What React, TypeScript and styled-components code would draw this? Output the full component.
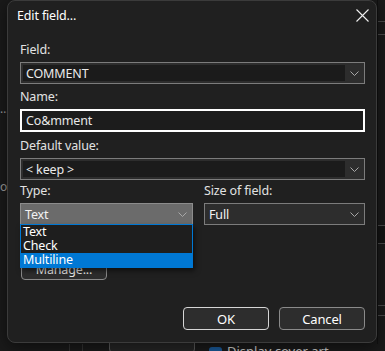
import React from "react";
import styled, { createGlobalStyle } from "styled-components";

const Global = createGlobalStyle`
  html, body { margin: 0; padding: 0; background: #1a1a1a; }
  body { font-family: "Noto Sans", "Open Sans", sans-serif; }
  * { box-sizing: border-box; }
`;

const Page = styled.div`
  position: relative;
  width: 385px;
  height: 351px;
  overflow: hidden;
  background: #1a1a1a;
  display: flex;
  flex-direction: column;
`;

/* ---------- background app (mostly hidden behind the dialog) ---------- */
const BackMain = styled.div`
  flex: 1;
  display: flex;
`;

const BackLeft = styled.div`
  width: 8px;
  display: flex;
  flex-direction: column;
  padding-top: 101px;
  gap: 62px;
  font-size: 12px;
  color: #9a9a9a;
  line-height: 16px;
`;

const BackCenter = styled.div`
  flex: 1;
`;

const BackRight = styled.div`
  width: 8px;
  display: flex;
  flex-direction: column;
  border-left: 1px solid #111;
`;

const RightSeg = styled.div<{ $h: number; $line?: boolean; $bg?: string }>`
  height: ${(p) => p.$h}px;
  flex: none;
  border-bottom: ${(p) => (p.$line ? "1px solid #4a4a4a" : "none")};
  background: ${(p) => p.$bg || "transparent"};
`;

const BackBottom = styled.div`
  height: 10px;
  margin-bottom: -3px;
  display: flex;
  align-items: flex-start;
  flex: none;
`;

const VLine = styled.div<{ $ml: number }>`
  width: 1px;
  height: 100%;
  margin-left: ${(p) => p.$ml}px;
  background: #333;
`;

const BackButton = styled.div`
  margin-left: 26px;
  margin-top: -8px;
  width: 86px;
  height: 17px;
  border: 1px solid #5c5c5c;
  border-radius: 4px;
  background: #262626;
`;

const BackCheck = styled.div`
  margin-left: 14px;
  margin-top: 3px;
  width: 13px;
  height: 13px;
  border-radius: 3px;
  background: #1a5a9a;
`;

const BackText = styled.div`
  margin-left: 5px;
  margin-top: -1px;
  font-size: 13px;
  line-height: 16px;
  color: #cfcfcf;
  white-space: nowrap;
`;

/* ---------------- dialog ---------------- */
const Dialog = styled.div`
  position: absolute;
  left: 7px;
  top: 0;
  width: 370px;
  height: 343px;
  border: 1px solid #3b3b3b;
  border-radius: 8px;
  background: #202020;
  box-shadow: 0 4px 16px rgba(0, 0, 0, 0.5);
  display: flex;
  flex-direction: column;
  color: #e4e4e4;
  font-size: 12px;
  letter-spacing: -0.15px;
`;

const TitleBar = styled.div`
  height: 31px;
  flex: none;
  display: flex;
  align-items: center;
  justify-content: space-between;
  padding: 0 7px 0 9px;
`;

const Title = styled.div`
  font-size: 12.5px;
  color: #ffffff;
  padding-bottom: 2px;
`;

const CloseBtn = styled.div`
  width: 14px;
  height: 14px;
  display: flex;
  align-items: center;
  justify-content: center;
  margin-bottom: 2px;
`;

const Body = styled.div`
  flex: 1;
  display: flex;
  flex-direction: column;
  padding: 0 11px 12px 12px;
`;

const Label = styled.div<{ $mt: number }>`
  margin-top: ${(p) => p.$mt}px;
  margin-bottom: 4px;
  height: 16px;
  line-height: 16px;
  font-size: 12.5px;
  color: #e2e2e2;
  white-space: nowrap;
`;

const Combo = styled.div<{ $open?: boolean }>`
  position: relative;
  height: 22px;
  border: 1px solid ${(p) => (p.$open ? "#8c8c8c" : "#7c7c7c")};
  background: ${(p) => (p.$open ? "#6b6b6b" : "#2d2d2d")};
  display: flex;
  align-items: stretch;
`;

const EditArea = styled.div`
  flex: 1;
  margin: 2px 0 2px 2px;
  background: #1b1b1b;
  padding-left: 3px;
  display: flex;
  align-items: center;
  font-size: 12.5px;
  color: #eaeaea;
`;

const ComboText = styled.div`
  flex: 1;
  padding-left: 4px;
  display: flex;
  align-items: center;
  font-size: 12.5px;
  color: #f2f2f2;
`;

const Arrow = styled.div`
  width: 19px;
  flex: none;
  display: flex;
  align-items: center;
  justify-content: center;
`;

const TextInput = styled.div`
  height: 23px;
  border: 2px solid #ffffff;
  background: #1c1c1c;
  padding-left: 4px;
  display: flex;
  align-items: center;
  font-size: 12.5px;
  color: #e8e8e8;
`;

const TwoCols = styled.div`
  display: grid;
  grid-template-columns: 173px 161px;
  column-gap: 11px;
`;

const Col = styled.div`
  display: flex;
  flex-direction: column;
`;

const DropList = styled.div`
  position: absolute;
  left: -1px;
  right: -1px;
  top: 100%;
  z-index: 2;
  border: 1px solid #0078d4;
  border-bottom: none;
  background: #1e1e1e;
  display: flex;
  flex-direction: column;
  box-shadow: 2px 3px 5px rgba(0, 0, 0, 0.5);
`;

const DropItem = styled.div<{ $sel?: boolean }>`
  height: 14px;
  line-height: 14px;
  margin: ${(p) => (p.$sel ? "0 -1px" : "0")};
  padding-left: ${(p) => (p.$sel ? "3px" : "2px")};
  background: ${(p) => (p.$sel ? "#0078d4" : "transparent")};
  color: #ffffff;
  font-size: 12.5px;
  &:last-child {
    height: 15px;
  }
`;

const ManageButton = styled.div`
  margin-top: 33px;
  margin-left: 1px;
  width: 86px;
  height: 22px;
  border: 1px solid #8a8a8a;
  border-radius: 4px;
  background: #2d2d2d;
  display: flex;
  align-items: center;
  justify-content: center;
  font-size: 12.5px;
  color: #eaeaea;
`;

const Spacer = styled.div`
  flex: 1;
`;

const ButtonRow = styled.div`
  display: flex;
  justify-content: flex-end;
  gap: 10px;
`;

const Button = styled.div<{ $primary?: boolean; $w: number }>`
  width: ${(p) => p.$w}px;
  height: 23px;
  border: 1px solid ${(p) => (p.$primary ? "#d6d6d6" : "#8a8a8a")};
  border-radius: 4px;
  background: #2d2d2d;
  display: flex;
  align-items: center;
  justify-content: center;
  font-size: 13px;
  color: #ffffff;
`;

const Chevron = () => (
  <svg width="9" height="5" viewBox="0 0 9 5">
    <path d="M0.5 0.5 L4.5 4.5 L8.5 0.5" fill="none" stroke="#a8a8a8" strokeWidth="1" />
  </svg>
);

const CloseIcon = () => (
  <svg width="13" height="13" viewBox="0 0 13 13">
    <path d="M0.5 0.5 L12.5 12.5 M12.5 0.5 L0.5 12.5" stroke="#f0f0f0" strokeWidth="1.1" />
  </svg>
);

export default function App() {
  return (
    <>
      <Global />
      <Page>
        <BackMain>
          <BackLeft>
            <span>…</span>
            <span>o</span>
          </BackLeft>
          <BackCenter />
          <BackRight>
            <RightSeg $h={22} $line />
            <RightSeg $h={13} $line />
            <RightSeg $h={191} $line />
            <RightSeg $h={18} $line $bg="#141414" />
            <RightSeg $h={62} $line />
            <RightSeg $h={10} $line />
          </BackRight>
        </BackMain>
        <BackBottom>
          <VLine $ml={69} />
          <VLine $ml={12} />
          <BackButton />
          <BackCheck />
          <BackText>Display cover art</BackText>
        </BackBottom>

        <Dialog>
          <TitleBar>
            <Title>Edit field...</Title>
            <CloseBtn>
              <CloseIcon />
            </CloseBtn>
          </TitleBar>
          <Body>
            <Label $mt={10}>Field:</Label>
            <Combo>
              <EditArea>COMMENT</EditArea>
              <Arrow>
                <Chevron />
              </Arrow>
            </Combo>

            <Label $mt={5}>Name:</Label>
            <TextInput>Co&amp;mment</TextInput>

            <Label $mt={6}>Default value:</Label>
            <Combo>
              <EditArea>&lt; keep &gt;</EditArea>
              <Arrow>
                <Chevron />
              </Arrow>
            </Combo>

            <TwoCols>
              <Col>
                <Label $mt={3}>Type:</Label>
                <Combo $open>
                  <ComboText>Text</ComboText>
                  <Arrow>
                    <Chevron />
                  </Arrow>
                  <DropList>
                    <DropItem>Text</DropItem>
                    <DropItem>Check</DropItem>
                    <DropItem $sel>Multiline</DropItem>
                  </DropList>
                </Combo>
              </Col>
              <Col>
                <Label $mt={3}>Size of field:</Label>
                <Combo>
                  <ComboText>Full</ComboText>
                  <Arrow>
                    <Chevron />
                  </Arrow>
                </Combo>
              </Col>
            </TwoCols>

            <ManageButton>Manage...</ManageButton>

            <Spacer />
            <ButtonRow>
              <Button $primary $w={86}>
                OK
              </Button>
              <Button $w={86}>Cancel</Button>
            </ButtonRow>
          </Body>
        </Dialog>
      </Page>
    </>
  );
}
